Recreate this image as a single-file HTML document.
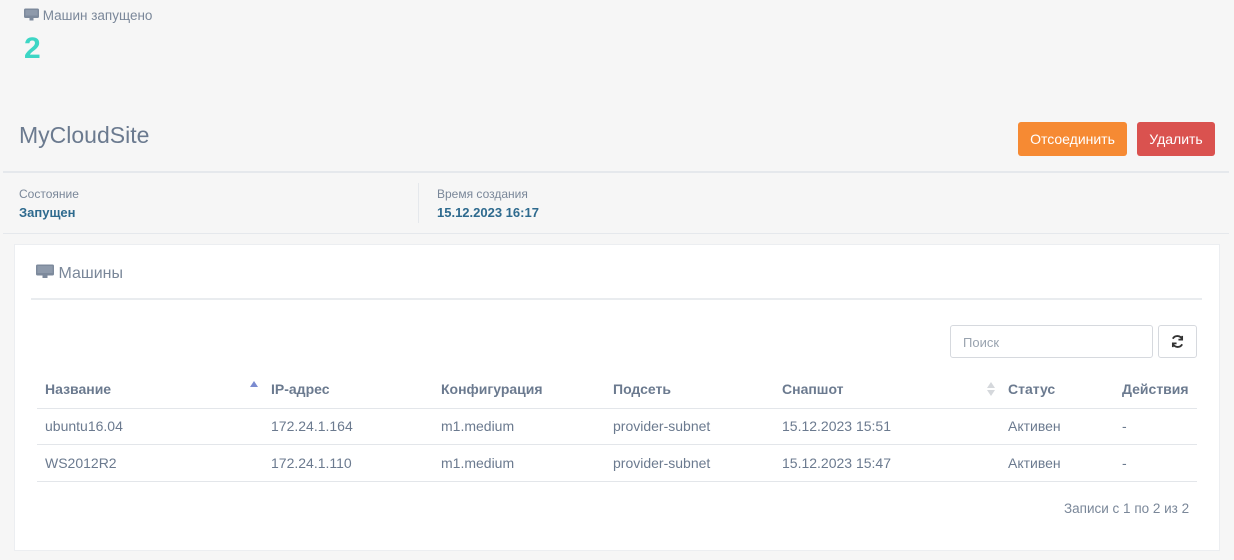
<!DOCTYPE html>
<html><head><meta charset="utf-8"><style>
*{box-sizing:border-box;margin:0;padding:0}
body{width:1234px;height:560px;background:#f6f6f6;font-family:"Liberation Sans",sans-serif;position:relative;overflow:hidden;color:#6b7a8f}
.a{position:absolute}
.mon{display:inline-block;vertical-align:middle}
th{font-weight:bold;color:#6b7a8f;font-size:14px;text-align:left}
td{font-size:14px;color:#6b7a8f}
</style></head><body>
<div class="a" style="left:24px;top:8px;font-size:13.5px;color:#7a8799">
<svg class="mon" width="15" height="13" viewBox="0 0 15 13" style="margin-top:-3px"><rect x="0" y="0.5" width="15" height="9.5" rx="1.5" fill="#7d8a9c"/><rect x="1.5" y="2" width="12" height="5.5" fill="#8e9aab"/><rect x="5.5" y="10" width="4" height="2.5" fill="#7d8a9c"/></svg> Машин запущено</div>
<div class="a" style="left:24px;top:32px;font-size:30px;font-weight:bold;color:#3dd6c5">2</div>
<div class="a" style="left:19px;top:122px;font-size:23px;color:#6b7a8f">MyCloudSite</div>
<div class="a" style="left:1018px;top:122px;width:109px;height:34px;background:#f68a33;border-radius:3px;color:#fff;font-size:14px;text-align:center;line-height:34px">Отсоединить</div>
<div class="a" style="left:1137px;top:122px;width:78px;height:34px;background:#da524f;border-radius:3px;color:#fff;font-size:14px;text-align:center;line-height:34px">Удалить</div>
<div class="a" style="left:3px;top:171px;width:1226px;height:2px;background:#e5e8ec"></div>
<div class="a" style="left:19px;top:187px;font-size:12px;color:#7a8799">Состояние</div>
<div class="a" style="left:19px;top:205px;font-size:13px;font-weight:bold;color:#2e6a8e">Запущен</div>
<div class="a" style="left:418px;top:183px;width:1px;height:40px;background:#e5e8ec"></div>
<div class="a" style="left:437px;top:187px;font-size:12px;color:#7a8799">Время создания</div>
<div class="a" style="left:437px;top:205px;font-size:13px;font-weight:bold;color:#2e6a8e">15.12.2023 16:17</div>
<div class="a" style="left:3px;top:233px;width:1226px;height:1px;background:#e5e8ec"></div>
<div class="a" style="left:14px;top:244px;width:1206px;height:307px;background:#fff;border:1px solid #eceef1"></div>
<div class="a" style="left:36px;top:265px;font-size:16px;color:#7a8799">
<svg class="mon" width="18" height="15" viewBox="0 0 18 15" style="margin-top:-4px"><rect x="0" y="0.5" width="18" height="11" rx="1.5" fill="#7d8a9c"/><rect x="1.5" y="2" width="15" height="7" fill="#8e9aab"/><rect x="6.5" y="11.5" width="5" height="2.5" fill="#7d8a9c"/></svg> Машины</div>
<div class="a" style="left:31px;top:298px;width:1171px;height:2px;background:#e9ecef"></div>
<div class="a" style="left:950px;top:325px;width:203px;height:33px;border:1px solid #d6d9de;border-radius:3px;font-size:13px;color:#99a3af;padding:9px 0 0 12px">Поиск</div>
<div class="a" style="left:1158px;top:325px;width:39px;height:33px;border:1px solid #d6d9de;border-radius:3px;text-align:center;padding-top:8px">
<svg width="15" height="15" viewBox="0 0 16 16" fill="none" stroke="#333" stroke-width="2"><path d="M13 6A5.5 5.5 0 0 0 3 5"/><path d="M3 10a5.5 5.5 0 0 0 10 1"/><path d="M13 2v4h-4" stroke-width="1.8"/><path d="M3 14v-4h4" stroke-width="1.8"/></svg></div>
<table class="a" style="left:37px;top:370px;width:1160px;border-collapse:collapse">
<tr style="height:38px;border-bottom:1px solid #e3e6ea"><th style="padding-left:8px;width:226px">Название</th><th style="padding-left:8px;width:170px">IP-адрес</th><th style="padding-left:8px;width:172px">Конфигурация</th><th style="padding-left:8px;width:169px">Подсеть</th><th style="padding-left:8px;width:226px">Снапшот</th><th style="padding-left:8px;width:114px">Статус</th><th style="padding-left:8px">Действия</th></tr>
<tr style="height:36px;border-bottom:1px solid #e3e6ea"><td style="padding-left:8px">ubuntu16.04</td><td style="padding-left:8px">172.24.1.164</td><td style="padding-left:8px">m1.medium</td><td style="padding-left:8px">provider-subnet</td><td style="padding-left:8px">15.12.2023 15:51</td><td style="padding-left:8px">Активен</td><td style="padding-left:8px">-</td></tr>
<tr style="height:37px;border-bottom:1px solid #e3e6ea"><td style="padding-left:8px">WS2012R2</td><td style="padding-left:8px">172.24.1.110</td><td style="padding-left:8px">m1.medium</td><td style="padding-left:8px">provider-subnet</td><td style="padding-left:8px">15.12.2023 15:47</td><td style="padding-left:8px">Активен</td><td style="padding-left:8px">-</td></tr>
</table>
<div class="a" style="left:250px;top:381px;width:0;height:0;border-left:4px solid transparent;border-right:4px solid transparent;border-bottom:6px solid #7b8bd0"></div>
<div class="a" style="left:987px;top:382px;width:0;height:0;border-left:4px solid transparent;border-right:4px solid transparent;border-bottom:6px solid #d5d8dc"></div>
<div class="a" style="left:987px;top:390px;width:0;height:0;border-left:4px solid transparent;border-right:4px solid transparent;border-top:6px solid #d5d8dc"></div>
<div class="a" style="left:1064px;top:501px;font-size:13.5px;color:#7a8799">Записи с 1 по 2 из 2</div>
</body></html>
